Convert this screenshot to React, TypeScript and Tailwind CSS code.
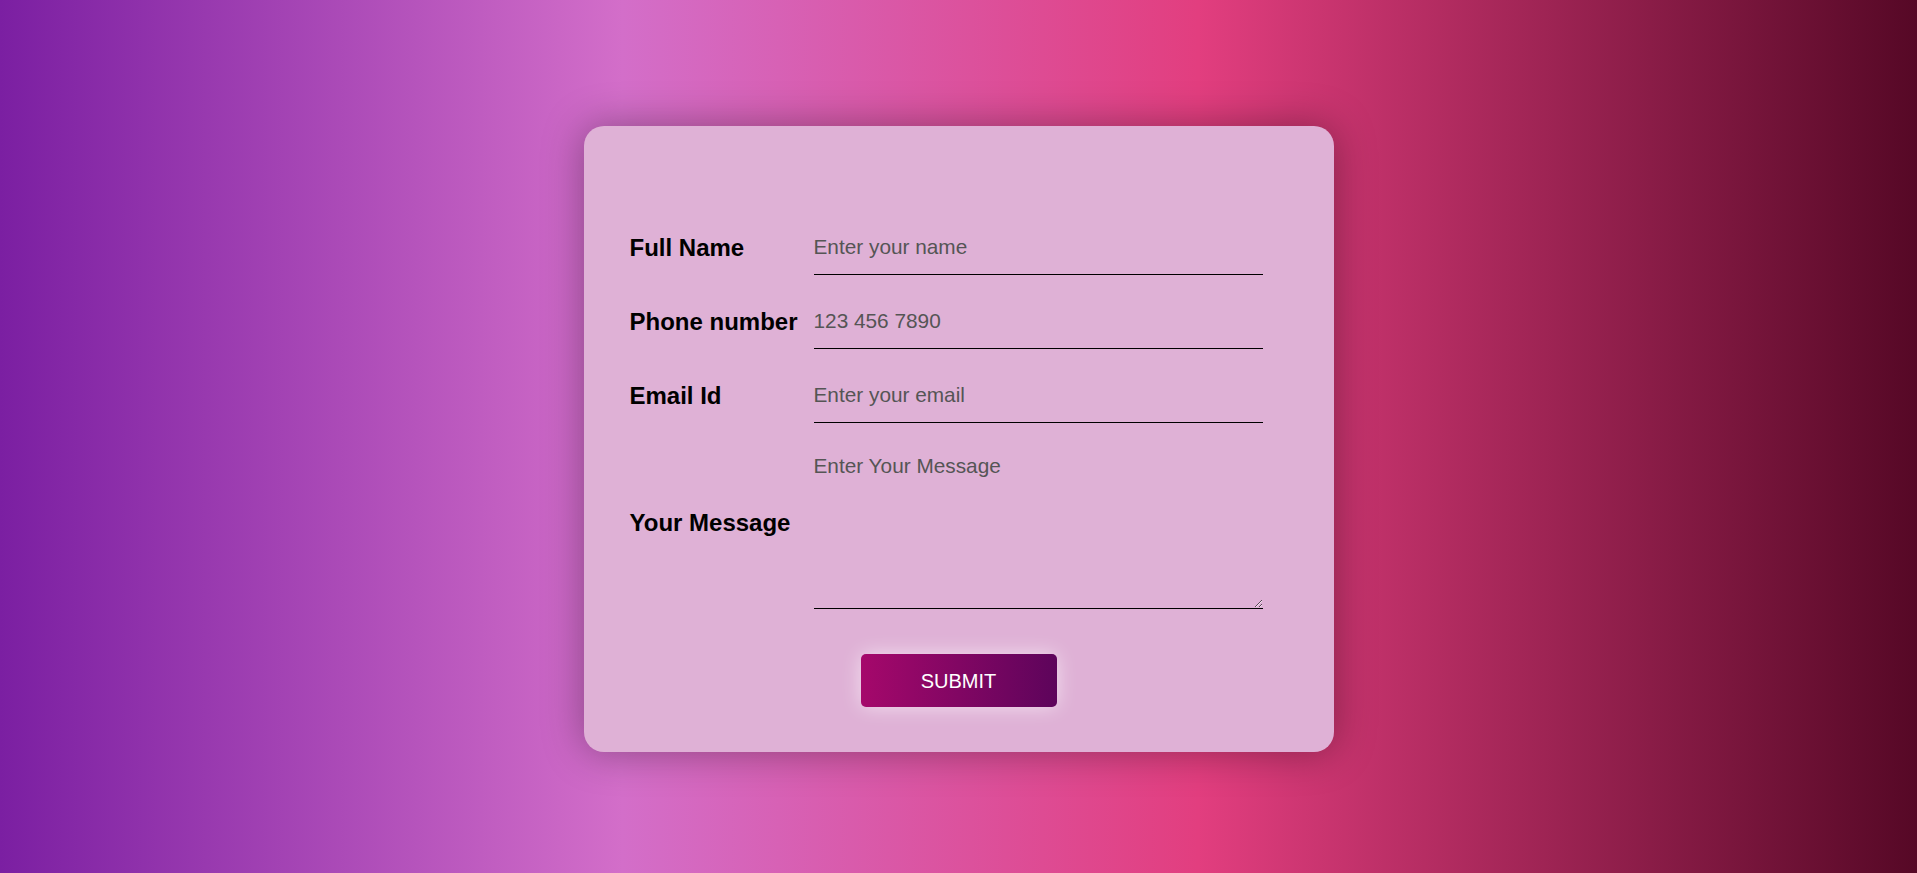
import React from "react";

const fields = [
  { label: "Full Name", placeholder: "Enter your name", type: "text" },
  { label: "Phone number", placeholder: "123 456 7890", type: "tel" },
  { label: "Email Id", placeholder: "Enter your email", type: "email" },
];

export default function App() {
  return (
    <div className="h-[873px] w-full flex justify-center pt-[126px] bg-[linear-gradient(to_right,#7b1fa2_0%,#d36ec9_32.5%,#e23e7f_62.5%,#560826_100%)] font-['Liberation_Sans',Arial,sans-serif]">
      <form
        onSubmit={(e) => e.preventDefault()}
        className="w-[750px] h-[626px] rounded-[20px] bg-[#dfb1d6] shadow-[0_0_40px_rgba(0,0,0,0.35)] pt-[94px] pl-[46px] flex flex-col"
      >
        {fields.map((f, i) => (
          <div key={f.label} className={`flex items-center ${i < 2 ? "mb-[19px]" : ""}`}>
            <label className="w-[184px] text-[24px] font-bold text-black">{f.label}</label>
            <input
              type={f.type}
              placeholder={f.placeholder}
              className="w-[449px] h-[55px] bg-transparent border-b border-black text-[20.8px] text-black placeholder:text-[#555] outline-none"
            />
          </div>
        ))}

        {/* message */}
        <div className="flex items-center mt-[14px]">
          <label className="w-[184px] text-[24px] font-bold text-black">Your Message</label>
          <textarea
            placeholder="Enter Your Message"
            className="w-[449px] h-[172px] bg-transparent border-b border-black text-[20.8px] text-black placeholder:text-[#555] pt-[13px] outline-none"
          />
        </div>

        <div className="flex justify-center mt-[45px] pr-[46px]">
          <button
            type="submit"
            className="w-[196px] h-[53px] rounded-[5px] text-white text-[20px] bg-[linear-gradient(to_right,#a5086b,#5d045b)] shadow-[0_0_20px_rgba(255,255,255,0.6)]"
          >
            SUBMIT
          </button>
        </div>
      </form>
    </div>
  );
}
